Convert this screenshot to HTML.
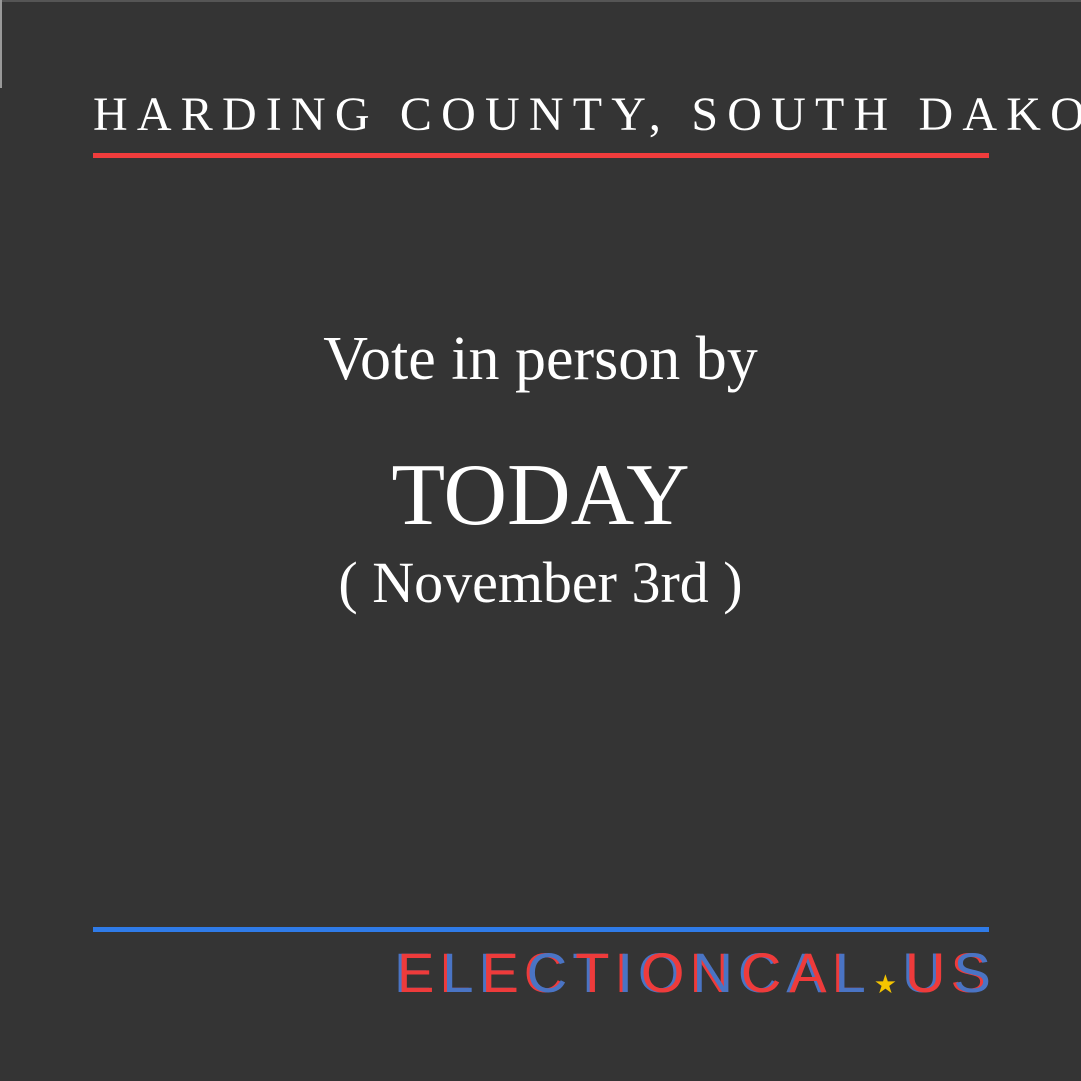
<!DOCTYPE html>
<html><head><meta charset="utf-8"><style>
html,body{margin:0;padding:0;}
body{width:1081px;height:1081px;background:#343434;position:relative;overflow:hidden;font-family:"Liberation Serif",serif;color:#fff;}
.t{position:absolute;line-height:1;white-space:nowrap;}
.c{left:0;width:1081px;text-align:center;}
.clip{position:absolute;left:0;top:0;width:1081px;height:200px;overflow:hidden;}
.logo{position:absolute;left:397px;width:594px;top:945px;display:flex;justify-content:space-between;font-family:"Liberation Sans",sans-serif;font-size:56px;line-height:1;}
.r{color:#ee3b3b;text-shadow:-3px 0 #4a74c4;}
.b{color:#4a74c4;text-shadow:-3px 0 #ee3b3b;}
</style></head><body>
<div style="position:absolute;left:0;top:0;width:1081px;height:2px;background:#555"></div>
<div style="position:absolute;left:0;top:0;width:2px;height:88px;background:#999"></div>
<div class="clip"><div class="t" style="left:93px;top:91px;font-size:48px;letter-spacing:9.2px;">HARDING COUNTY, SOUTH DAKOTA</div></div>
<div style="position:absolute;left:93px;top:153px;width:896px;height:5px;background:#f03c3c"></div>
<div class="t c" style="top:328px;font-size:62px;">Vote in person by</div>
<div class="t c" style="top:452px;font-size:88px;">TODAY</div>
<div class="t c" style="top:554px;font-size:58px;">( November 3rd )</div>
<div style="position:absolute;left:93px;top:927px;width:896px;height:5px;background:#2f7be8"></div>
<div class="logo">
<span class="r">E</span><span class="b">L</span><span class="r">E</span><span class="b">C</span><span class="r">T</span><span class="b">I</span><span class="r">O</span><span class="b">N</span><span class="r">C</span><span class="r">A</span><span class="b">L</span><span style="color:#f5c400;font-size:26px;align-self:flex-end;margin-bottom:4px">★</span><span class="r">U</span><span class="b">S</span>
</div>
</body></html>
